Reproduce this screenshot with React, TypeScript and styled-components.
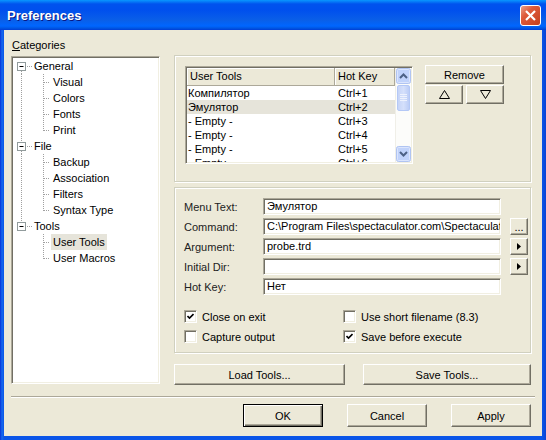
import React from 'react';
import styled, { createGlobalStyle, css } from 'styled-components';

const GlobalStyle = createGlobalStyle`
  html, body {
    margin: 0;
    padding: 0;
    background: #fff;
  }
  body {
    font-family: "Liberation Sans", Arial, sans-serif;
    font-size: 11px;
    color: #000;
  }
  * {
    box-sizing: border-box;
  }
`;

const sunken = css`
  background: #fff;
  border: 1px solid;
  border-color: #aca899 #fff #fff #aca899;
  box-shadow: inset 1px 1px 0 #716f64, inset -1px -1px 0 #f1efe2;
`;

const Window = styled.div`
  width: 546px;
  height: 440px;
  display: flex;
  flex-direction: column;
  background: linear-gradient(to right, #0831d9 0px, #166aee 2px, #0a55e8 4px, #0a55e8 542px, #0a44d4 546px);
`;

const TitleBar = styled.div`
  height: 30px;
  display: flex;
  align-items: center;
  justify-content: space-between;
  padding: 0 5px 0 7px;
  background: linear-gradient(
    to bottom,
    #0997ff 0px,
    #0053ee 4px,
    #0050ee 10px,
    #0a5fe8 20px,
    #0066ff 26px,
    #0058e4 28px,
    #003dd7 30px
  );
`;

const Title = styled.span`
  color: #fff;
  font-family: "Liberation Sans", Arial, sans-serif;
  font-weight: bold;
  font-size: 13px;
  text-shadow: 1px 1px 0 #0a1883;
`;

const CloseButton = styled.div`
  width: 21px;
  height: 21px;
  border: 1px solid #fff;
  border-radius: 3px;
  background: linear-gradient(135deg, #e9a08a 0%, #de5a3a 35%, #c5401c 100%);
  display: flex;
  align-items: center;
  justify-content: center;
`;

const Body = styled.div`
  flex: 1;
  margin: 0 4px 4px;
  background: #ece9d8;
  display: flex;
  flex-direction: column;
  padding: 8px 11px 9px 7px;
`;

const Main = styled.div`
  display: grid;
  grid-template-columns: 149px 357px;
  column-gap: 14px;
`;

const LeftColumn = styled.div`
  display: flex;
  flex-direction: column;
`;

const Caption = styled.div`
  height: 14px;
  line-height: 14px;
  margin: 0 0 4px 1px;
  u {
    text-decoration: underline;
  }
`;

const Tree = styled.div`
  ${sunken};
  height: 328px;
  padding: 1px;
`;

const TreeRow = styled.div`
  display: flex;
  height: 16px;
  align-items: stretch;
`;

const TreeLabel = styled.span<{ $selected?: boolean }>`
  padding: 0 2px;
  line-height: 16px;
  white-space: nowrap;
  background: ${(p) => (p.$selected ? '#e6e4da' : 'transparent')};
`;

const RightColumn = styled.div`
  display: flex;
  flex-direction: column;
  padding-top: 17px;
`;

const Group = styled.div<{ $height: number }>`
  height: ${(p) => p.$height}px;
  border: 1px solid #d0d0bf;
  box-shadow: inset 1px 1px 0 #fff, 1px 1px 0 #fff;
`;

const ToolsGroup = styled(Group)`
  display: flex;
  align-items: flex-start;
  padding: 10px 0 0 10px;
`;

const ListView = styled.div`
  ${sunken};
  width: 228px;
  height: 98px;
  display: flex;
  padding: 1px;
  overflow: hidden;
`;

const ListBody = styled.div`
  flex: 1;
  display: flex;
  flex-direction: column;
  overflow: hidden;
`;

const ListHeader = styled.div`
  display: grid;
  grid-template-columns: 148px 60px;
  height: 18px;
  flex-shrink: 0;
`;

const HeaderCell = styled.div`
  background: #ece9d8;
  border-right: 1px solid #aca899;
  border-bottom: 1px solid #aca899;
  box-shadow: inset 1px 1px 0 #fff;
  padding-left: 3px;
  line-height: 17px;
`;

const ListRow = styled.div<{ $selected?: boolean }>`
  display: grid;
  grid-template-columns: 150px 58px;
  height: 14px;
  line-height: 14px;
  flex-shrink: 0;
  background: ${(p) => (p.$selected ? '#e6e4da' : 'transparent')};
  span {
    padding-left: 1px;
    white-space: nowrap;
  }
`;

const ScrollBar = styled.div`
  width: 16px;
  display: flex;
  flex-direction: column;
  background: #fcfcfa;
  border-left: 1px solid #f0efe8;
`;

const ScrollTrack = styled.div`
  flex: 1;
  padding: 1px 0;
`;

const ScrollThumb = styled.div`
  height: 26px;
  margin: 0 1px;
  border: 1px solid #b4c8f6;
  border-radius: 2px;
  background: linear-gradient(to right, #c6d4f7, #d5e0fb 50%, #bccdf6);
  display: flex;
  align-items: center;
  justify-content: center;
`;

const SideButtons = styled.div`
  margin: -1px 0 0 12px;
  width: 79px;
  display: flex;
  flex-direction: column;
  gap: 1px;
`;

const ArrowPair = styled.div`
  display: grid;
  grid-template-columns: 38px 38px;
  column-gap: 3px;
`;

const Button = styled.button<{ $h?: number; $default?: boolean }>`
  font-family: "Liberation Sans", Arial, sans-serif;
  font-size: 11px;
  color: #000;
  height: ${(p) => p.$h ?? 19}px;
  padding: 0;
  background: #ece9d8;
  border: 1px solid;
  border-color: #fff #716f64 #716f64 #fff;
  box-shadow: inset -1px -1px 0 #aca899;
  display: flex;
  align-items: center;
  justify-content: center;
  ${(p) =>
    p.$default &&
    css`
      border-color: #000;
      box-shadow: inset 1px 1px 0 #fff, inset -1px -1px 0 #716f64, inset -2px -2px 0 #aca899;
    `}
`;

const FormGroup = styled(Group)`
  margin-top: 5px;
  padding: 10px 0 0 9px;
  display: flex;
  flex-direction: column;
`;

const Fields = styled.div`
  display: grid;
  grid-template-columns: 79px 238px 27px;
  row-gap: 3px;
  grid-auto-rows: 17px;
  align-items: center;
`;

const FieldLabel = styled.label`
  grid-column: 1;
  color: #222;
`;

const TextBox = styled.div`
  ${sunken};
  grid-column: 2;
  height: 17px;
  line-height: 15px;
  padding-left: 3px;
  white-space: nowrap;
  overflow: hidden;
`;

const FieldButton = styled(Button)`
  grid-column: 3;
  width: 18px;
  justify-self: end;
`;

const Options = styled.div`
  margin-top: 15px;
  display: grid;
  grid-template-columns: 159px 180px;
  row-gap: 7px;
`;

const Option = styled.label`
  display: flex;
  align-items: center;
  gap: 5px;
  height: 13px;
  white-space: nowrap;
`;

const CheckBox = styled.span`
  ${sunken};
  width: 13px;
  height: 13px;
  display: flex;
  align-items: center;
  justify-content: center;
  flex-shrink: 0;
`;

const FileButtons = styled.div`
  margin-top: 11px;
  display: grid;
  grid-template-columns: 171px 168px;
  column-gap: 18px;
`;

const Separator = styled.div`
  margin: 11px -4px 0 0;
  height: 2px;
  border-top: 1px solid #aca899;
  border-bottom: 1px solid #fff;
`;

const DialogButtons = styled.div`
  margin-top: 6px;
  display: flex;
  justify-content: flex-end;
  gap: 24px;
  button {
    width: 80px;
  }
`;

type Node = { label: string; level: 0 | 1; first?: boolean; last?: boolean; pass?: boolean; selected?: boolean };

const treeData: Node[] = [
  { label: 'General', level: 0, first: true },
  { label: 'Visual', level: 1, pass: true },
  { label: 'Colors', level: 1, pass: true },
  { label: 'Fonts', level: 1, pass: true },
  { label: 'Print', level: 1, pass: true, last: true },
  { label: 'File', level: 0 },
  { label: 'Backup', level: 1, pass: true },
  { label: 'Association', level: 1, pass: true },
  { label: 'Filters', level: 1, pass: true },
  { label: 'Syntax Type', level: 1, pass: true, last: true },
  { label: 'Tools', level: 0, last: true },
  { label: 'User Tools', level: 1, selected: true },
  { label: 'User Macros', level: 1, last: true },
];

const dot = { stroke: '#a0a0a0', strokeWidth: 1, strokeDasharray: '1 1' };

const Gutter = ({ node }: { node: Node }) => {
  if (node.level === 0) {
    return (
      <svg width="19" height="16">
        {!node.first && <line x1="8.5" y1="0" x2="8.5" y2="4" {...dot} />}
        {!node.last && <line x1="8.5" y1="13" x2="8.5" y2="16" {...dot} />}
        <line x1="14" y1="8.5" x2="19" y2="8.5" {...dot} />
        <rect x="4.5" y="4.5" width="8" height="8" fill="#fff" stroke="#919b9c" />
        <line x1="6.5" y1="8.5" x2="10.5" y2="8.5" stroke="#000" />
      </svg>
    );
  }
  return (
    <svg width="38" height="16">
      {node.pass && <line x1="8.5" y1="0" x2="8.5" y2="16" {...dot} />}
      <line x1="30.5" y1="0" x2="30.5" y2={node.last ? 9 : 16} {...dot} />
      <line x1="31" y1="8.5" x2="37" y2="8.5" {...dot} />
    </svg>
  );
};

const tools = [
  { name: 'Компилятор', key: 'Ctrl+1' },
  { name: 'Эмулятор', key: 'Ctrl+2', selected: true },
  { name: '- Empty -', key: 'Ctrl+3' },
  { name: '- Empty -', key: 'Ctrl+4' },
  { name: '- Empty -', key: 'Ctrl+5' },
  { name: '- Empty -', key: 'Ctrl+6' },
];

const ScrollArrow = ({ down }: { down?: boolean }) => (
  <svg width="15" height="16" style={{ display: 'block' }}>
    <rect x="0.5" y="0.5" width="14" height="15" rx="2" fill="#c1d3fb" stroke="#b0c4f2" />
    <rect x="1.5" y="1.5" width="12" height="13" rx="1" fill="none" stroke="#dbe5fd" />
    <polyline
      points={down ? '4,6 7.5,9.5 11,6' : '4,10 7.5,6.5 11,10'}
      fill="none"
      stroke="#4d6185"
      strokeWidth="2"
    />
  </svg>
);

const Grip = () => (
  <svg width="7" height="8">
    {[0.5, 2.5, 4.5, 6.5].map((y) => (
      <line key={y} x1="0" y1={y} x2="7" y2={y} stroke="#eef2fd" />
    ))}
  </svg>
);

const Tri = ({ down }: { down?: boolean }) => (
  <svg width="11" height="9">
    <polygon
      points={down ? '0.5,0.5 10.5,0.5 5.5,8.5' : '0.5,8.5 10.5,8.5 5.5,0.5'}
      fill="none"
      stroke="#000"
    />
  </svg>
);

const Play = () => (
  <svg width="4" height="7">
    <polygon points="0,0 4,3.5 0,7" fill="#000" />
  </svg>
);

const Check = () => (
  <svg width="7" height="7">
    <polyline points="0.5,3 2.5,5 6.5,1" fill="none" stroke="#000" strokeWidth="1.6" />
  </svg>
);

const fields = [
  { label: 'Menu Text:', value: 'Эмулятор' },
  { label: 'Command:', value: 'C:\\Program Files\\spectaculator.com\\Spectaculator\\Spectaculator.exe', btn: '...' },
  { label: 'Argument:', value: 'probe.trd', btn: 'play' },
  { label: 'Initial Dir:', value: '', btn: 'play' },
  { label: 'Hot Key:', value: 'Нет' },
];

const options = [
  { label: 'Close on exit', checked: true },
  { label: 'Use short filename (8.3)', checked: false },
  { label: 'Capture output', checked: false },
  { label: 'Save before execute', checked: true },
];

const App = () => (
  <>
    <GlobalStyle />
    <Window>
      <TitleBar>
        <Title>Preferences</Title>
        <CloseButton>
          <svg width="11" height="11">
            <line x1="1" y1="1" x2="10" y2="10" stroke="#fff" strokeWidth="2.2" />
            <line x1="10" y1="1" x2="1" y2="10" stroke="#fff" strokeWidth="2.2" />
          </svg>
        </CloseButton>
      </TitleBar>
      <Body>
        <Main>
          <LeftColumn>
            <Caption>
              <u>C</u>ategories
            </Caption>
            <Tree>
              {treeData.map((n) => (
                <TreeRow key={n.label}>
                  <Gutter node={n} />
                  <TreeLabel $selected={n.selected}>{n.label}</TreeLabel>
                </TreeRow>
              ))}
            </Tree>
          </LeftColumn>
          <RightColumn>
            <ToolsGroup $height={127}>
              <ListView>
                <ListBody>
                  <ListHeader>
                    <HeaderCell>User Tools</HeaderCell>
                    <HeaderCell>Hot Key</HeaderCell>
                  </ListHeader>
                  {tools.map((t) => (
                    <ListRow key={t.key} $selected={t.selected}>
                      <span>{t.name}</span>
                      <span>{t.key}</span>
                    </ListRow>
                  ))}
                </ListBody>
                <ScrollBar>
                  <ScrollArrow />
                  <ScrollTrack>
                    <ScrollThumb>
                      <Grip />
                    </ScrollThumb>
                  </ScrollTrack>
                  <ScrollArrow down />
                </ScrollBar>
              </ListView>
              <SideButtons>
                <Button>Remove</Button>
                <ArrowPair>
                  <Button>
                    <Tri />
                  </Button>
                  <Button>
                    <Tri down />
                  </Button>
                </ArrowPair>
              </SideButtons>
            </ToolsGroup>
            <FormGroup $height={166}>
              <Fields>
                {fields.map((f) => (
                  <React.Fragment key={f.label}>
                    <FieldLabel>{f.label}</FieldLabel>
                    <TextBox>{f.value}</TextBox>
                    {f.btn && <FieldButton $h={17}>{f.btn === 'play' ? <Play /> : f.btn}</FieldButton>}
                  </React.Fragment>
                ))}
              </Fields>
              <Options>
                {options.map((o) => (
                  <Option key={o.label}>
                    <CheckBox>{o.checked && <Check />}</CheckBox>
                    {o.label}
                  </Option>
                ))}
              </Options>
            </FormGroup>
            <FileButtons>
              <Button $h={21}>Load Tools...</Button>
              <Button $h={21}>Save Tools...</Button>
            </FileButtons>
          </RightColumn>
        </Main>
        <Separator />
        <DialogButtons>
          <Button $h={23} $default>
            OK
          </Button>
          <Button $h={23}>Cancel</Button>
          <Button $h={23}>Apply</Button>
        </DialogButtons>
      </Body>
    </Window>
  </>
);

export default App;
